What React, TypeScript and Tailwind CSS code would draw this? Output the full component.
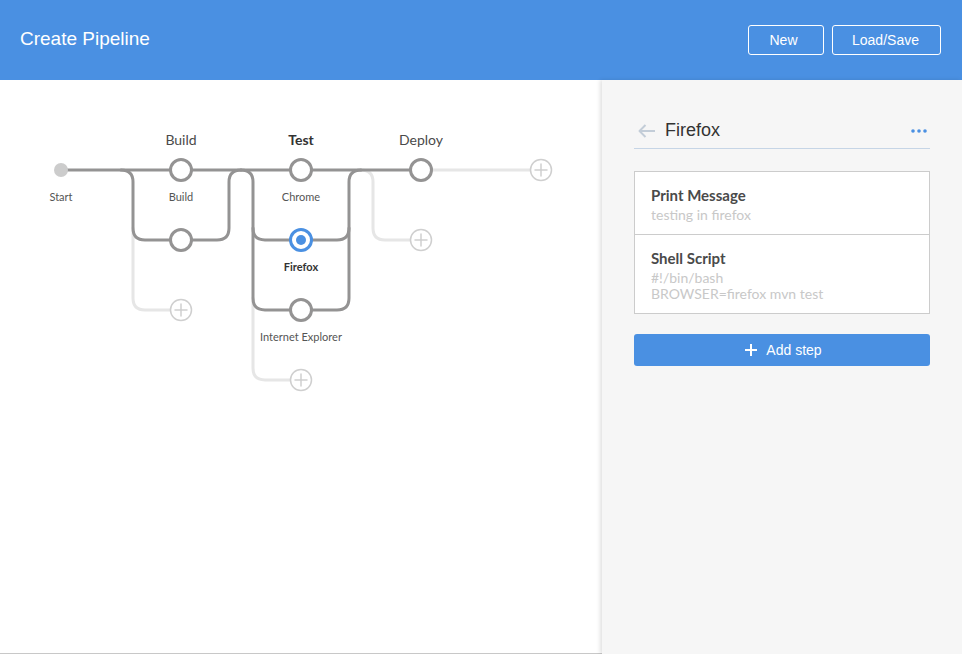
import React from 'react';

const DARK = '#949393';
const LIGHT = '#e6e6e6';
const ADD = '#cfcfcf';
const BLUE = '#4a90e2';

function Node({ x, y }: { x: number; y: number }) {
  return <circle cx={x} cy={y} r={10.5} fill="#fff" stroke={DARK} strokeWidth={3} />;
}

function AddNode({ x, y }: { x: number; y: number }) {
  return (
    <g>
      <circle cx={x} cy={y} r={10.5} fill="#fff" stroke={ADD} strokeWidth={1.5} />
      <path d={`M${x - 6} ${y} H${x + 6} M${x} ${y - 6} V${y + 6}`} stroke={ADD} strokeWidth={1.5} />
    </g>
  );
}

function PipelineGraph() {
  const label = { fontFamily: 'Lato, "Noto Sans", sans-serif' };
  return (
    <svg width={600} height={573} className="block">
      <g transform="translate(0,-80)" fill="none" strokeLinecap="round">
        {/* light connectors */}
        <path d="M133 228 V298 Q133 310 145 310 H170" stroke={LIGHT} strokeWidth={3} />
        <path d="M253 298 V368 Q253 380 265 380 H290" stroke={LIGHT} strokeWidth={3} />
        <path d="M361 170 Q373 170 373 182 V228 Q373 240 385 240 H410" stroke={LIGHT} strokeWidth={3} />
        <path d="M432 170 H530" stroke={LIGHT} strokeWidth={3} />

        {/* dark connectors */}
        <path d="M61 170 H421" stroke={DARK} strokeWidth={3} />
        <path d="M121 170 Q133 170 133 182 V228 Q133 240 145 240 H217 Q229 240 229 228 V182 Q229 170 241 170" stroke={DARK} strokeWidth={3} />
        <path d="M241 170 Q253 170 253 182 V298 Q253 310 265 310 H337 Q349 310 349 298 V182 Q349 170 361 170" stroke={DARK} strokeWidth={3} />
        <path d="M253 228 Q253 240 265 240 H337 Q349 240 349 228" stroke={DARK} strokeWidth={3} />

        <circle cx={61} cy={170} r={7} fill="#cccccc" />
        <Node x={181} y={170} />
        <Node x={181} y={240} />
        <Node x={301} y={170} />
        <circle cx={301} cy={240} r={10.5} fill="#fff" stroke={BLUE} strokeWidth={3} />
        <circle cx={301} cy={240} r={5} fill={BLUE} />
        <Node x={301} y={310} />
        <Node x={421} y={170} />

        <AddNode x={181} y={310} />
        <AddNode x={301} y={380} />
        <AddNode x={421} y={240} />
        <AddNode x={541} y={170} />

        <g style={label} textAnchor="middle" stroke="none">
          <text x={181} y={145} fontSize={14} fill="#4a4a4a">Build</text>
          <text x={301} y={145} fontSize={14} fill="#333" fontWeight={700}>Test</text>
          <text x={421} y={145} fontSize={14} fill="#4a4a4a">Deploy</text>
          <text x={61} y={201} fontSize={11} fill="#555">Start</text>
          <text x={181} y={201} fontSize={11} fill="#555">Build</text>
          <text x={301} y={201} fontSize={11} fill="#555">Chrome</text>
          <text x={301} y={271} fontSize={11} fill="#333" fontWeight={700}>Firefox</text>
          <text x={301} y={341} fontSize={11} fill="#555">Internet Explorer</text>
        </g>
      </g>
    </svg>
  );
}

export default function App() {
  return (
    <div className="w-[962px] h-[654px] flex flex-col overflow-hidden bg-white">
      <header className="h-20 shrink-0 bg-[#4a90e2] flex items-center justify-between pl-5 pr-[21px] text-white font-['Liberation_Sans',Arial,sans-serif]">
        <h1 className="text-[19px] font-normal -mt-[2px]">Create Pipeline</h1>
        <div className="flex gap-2">
          <button className="w-[76px] h-[30px] border border-white rounded-[3px] text-[14px] pr-[5px]">New</button>
          <button className="w-[109px] h-[30px] border border-white rounded-[3px] text-[14px] pr-[2px]">Load/Save</button>
        </div>
      </header>

      <div className="flex flex-1 min-h-0">
        <div className="flex-1 border-b border-[#c8c8c8] overflow-hidden">
          <PipelineGraph />
        </div>

        <aside className="w-[360px] bg-[#f6f6f6] shadow-[-2px_0_4px_rgba(0,0,0,0.12)] px-8 pt-[33px] relative">
          <div className="h-9 flex items-center border-b border-[#c6d5e6]">
            <svg width={18} height={14} viewBox="0 0 18 14" className="ml-1">
              <path d="M1.5 7 H17 M7.5 1 L1.5 7 L7.5 13" fill="none" stroke="#c3cdd8" strokeWidth={2} strokeLinejoin="round" />
            </svg>
            <span className="ml-[9px] text-[18px] text-[#333] font-['Liberation_Sans',Arial,sans-serif]">Firefox</span>
            <svg width={16} height={4} viewBox="0 0 16 4" className="ml-auto mr-[3px]">
              <circle cx={2} cy={2} r={1.8} fill={BLUE} />
              <circle cx={8} cy={2} r={1.8} fill={BLUE} />
              <circle cx={14} cy={2} r={1.8} fill={BLUE} />
            </svg>
          </div>

          <div className="mt-[22px] bg-white border border-[#cccccc] font-['Lato','Noto_Sans',sans-serif]">
            <div className="pl-4 pt-[13px] pb-[11px] border-b border-[#cccccc]">
              <div className="text-[15px] leading-5 font-bold text-[#4a4a4a]">Print Message</div>
              <div className="mt-[2px] text-[14px] leading-4 text-[#c8c8c8]">testing in firefox</div>
            </div>
            <div className="pl-4 pt-[13px] pb-[11px]">
              <div className="text-[15px] leading-5 font-bold text-[#4a4a4a]">Shell Script</div>
              <div className="mt-[2px] text-[14px] leading-4 text-[#c8c8c8]">#!/bin/bash</div>
              <div className="text-[14px] leading-4 text-[#c8c8c8]">BROWSER=firefox mvn test</div>
            </div>
          </div>

          <button className="mt-5 w-full h-[32px] bg-[#4a90e2] rounded-[3px] flex items-center justify-center gap-[9px] pl-[3px] text-white text-[14px] font-['Liberation_Sans',Arial,sans-serif]">
            <svg width={12} height={12} viewBox="0 0 12 12">
              <path d="M6 0 V12 M0 6 H12" stroke="#fff" strokeWidth={2} />
            </svg>
            Add step
          </button>
        </aside>
      </div>
    </div>
  );
}
